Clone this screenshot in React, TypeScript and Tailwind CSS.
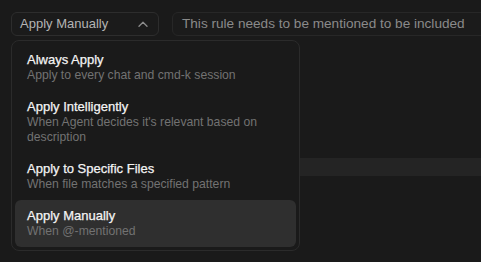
const options = [
  { title: "Always Apply", desc: "Apply to every chat and cmd-k session" },
  {
    title: "Apply Intelligently",
    desc: "When Agent decides it's relevant based on description",
  },
  { title: "Apply to Specific Files", desc: "When file matches a specified pattern" },
  { title: "Apply Manually", desc: "When @-mentioned" },
];

const App = () => {
  const selected = "Apply Manually";

  return (
    <div className="relative w-full h-[262px] overflow-hidden bg-[#1a1a1a] font-['Liberation_Sans',Arial,sans-serif] text-[13px]">
      {/* top row */}
      <div className="flex items-center gap-[13px] pt-3 pl-[11px]">
        <button className="flex items-center justify-between w-[148px] h-6 shrink-0 pl-2 pr-[10px] rounded-md border border-[#2d2d2d] bg-[#1b1b1b] text-[#b4b4b4] leading-4">
          <span>{selected}</span>
          <svg width="10" height="6" viewBox="0 0 10 6" fill="none">
            <path
              d="M1 5.2 L5 1.2 L9 5.2"
              stroke="#8c8c8c"
              strokeWidth="1.3"
              strokeLinecap="round"
              strokeLinejoin="round"
            />
          </svg>
        </button>
        <div className="flex items-center w-[330px] h-6 shrink-0 pl-[9px] rounded-md border border-[#272727] bg-[#1b1b1b] text-[#8a8a8a] text-[13.6px] leading-4">
          This rule needs to be mentioned to be included
        </div>
      </div>

      {/* field behind the menu */}
      <div className="mt-[122px] ml-[11px] h-[18px] bg-[#242424]"></div>

      {/* dropdown menu */}
      <div className="absolute top-[40px] left-[11px] w-[289px] p-[3px] rounded-lg border border-[#2b2b2b] bg-[#1a1a1a]">
        {options.map((opt) => (
          <div
            key={opt.title}
            className={`px-3 py-2 rounded-md ${
              opt.title === selected ? "bg-[#2f2f2f]" : ""
            }`}
          >
            <div className="text-[#f4f4f4] leading-4 [-webkit-text-stroke:0.25px_#f4f4f4]">
              {opt.title}
            </div>
            <div className="text-[#727272] text-[12.2px] leading-[15px]">
              {opt.desc}
            </div>
          </div>
        ))}
      </div>
    </div>
  );
};

export default App;
